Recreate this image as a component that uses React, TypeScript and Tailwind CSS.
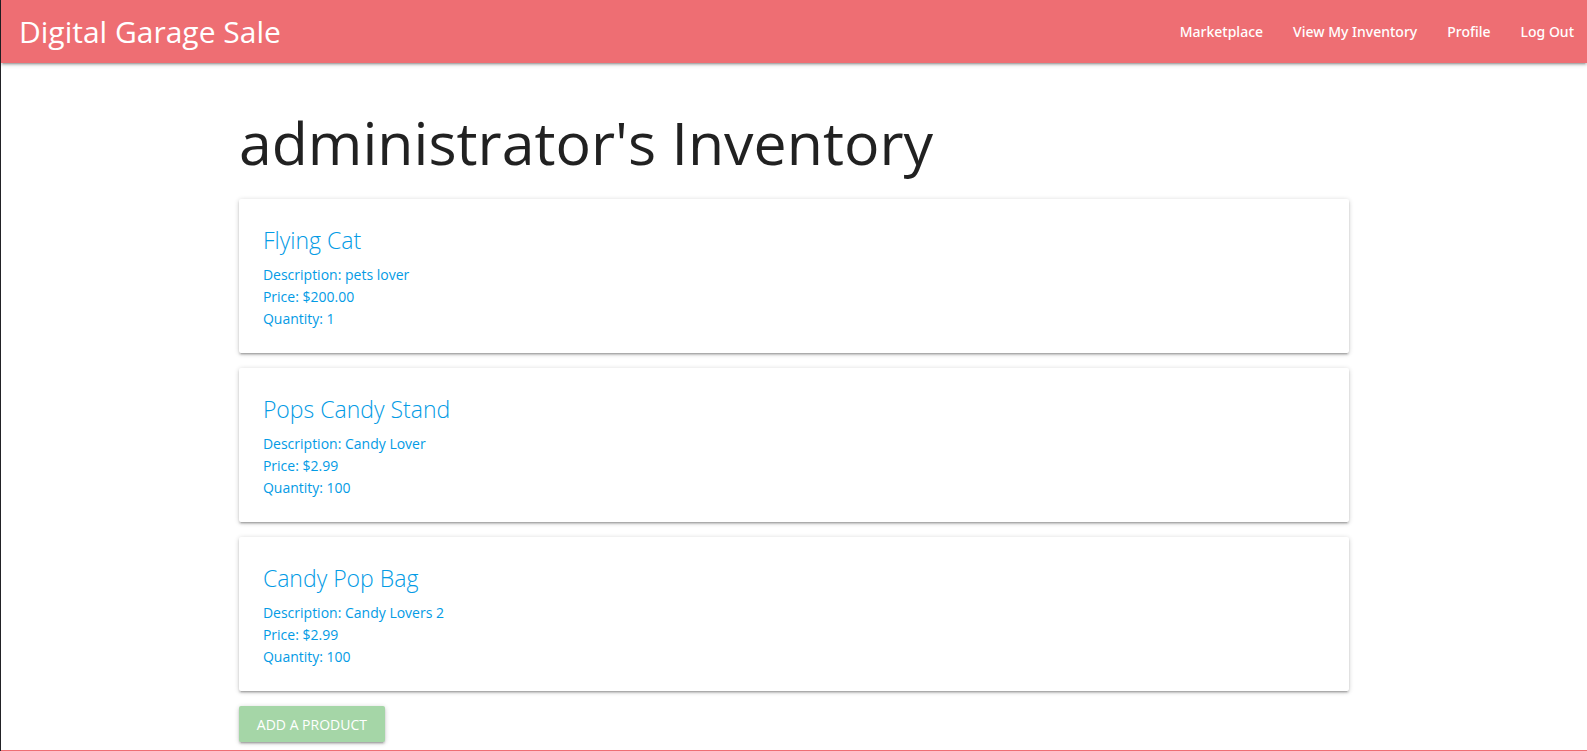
const navItems = ["Marketplace", "View My Inventory", "Profile", "Log Out"];

const products = [
  { name: "Flying Cat", description: "pets lover", price: "$200.00", quantity: 1 },
  { name: "Pops Candy Stand", description: "Candy Lover", price: "$2.99", quantity: 100 },
  { name: "Candy Pop Bag", description: "Candy Lovers 2", price: "$2.99", quantity: 100 },
];

export default function App() {
  return (
    <div className="flex min-h-screen flex-col border-l border-[#222226] bg-white font-['Open_Sans','Noto_Sans',sans-serif] text-[14px] text-black/87">
      <nav className="flex h-[63px] items-center justify-between bg-[#ee6e73] pr-[13px] pl-[18px] text-white shadow-[0_2px_2px_0_rgba(0,0,0,0.14),0_3px_1px_-2px_rgba(0,0,0,0.12),0_1px_5px_0_rgba(0,0,0,0.2)]">
        <a href="#" className="text-[30px]">Digital Garage Sale</a>
        <ul className="flex gap-[30px] font-['Noto_Sans','Open_Sans',sans-serif] font-medium">
          {navItems.map((item) => (
            <li key={item}>
              <a href="#">{item}</a>
            </li>
          ))}
        </ul>
      </nav>
      <main className="mx-auto w-[70%] flex-1 pt-11 pb-2">
        <h1 className="mb-[22px] text-[59px] leading-[70px]">administrator's Inventory</h1>
        {products.map((p) => (
          <a
            href="#"
            key={p.name}
            className="mb-[15px] block rounded-xs px-6 pt-6 pb-[23px] text-[#039be5] shadow-[0_2px_2px_0_rgba(0,0,0,0.14),0_3px_1px_-2px_rgba(0,0,0,0.12),0_1px_5px_0_rgba(0,0,0,0.2)]"
          >
            <h2 className="mb-[7px] text-[23px] leading-[34px] font-light">{p.name}</h2>
            <p className="leading-[22px]">Description: {p.description}</p>
            <p className="leading-[22px]">Price: {p.price}</p>
            <p className="leading-[22px]">Quantity: {p.quantity}</p>
          </a>
        ))}
        <button
          type="button"
          className="block h-9 min-w-[146px] rounded-xs bg-[#a5d6a7] px-4 text-[14px] text-white uppercase shadow-[0_2px_2px_0_rgba(0,0,0,0.14),0_3px_1px_-2px_rgba(0,0,0,0.12),0_1px_5px_0_rgba(0,0,0,0.2)]"
        >
          Add a product
        </button>
      </main>
      <footer className="h-px bg-[#ee6e73]" />
    </div>
  );
}
